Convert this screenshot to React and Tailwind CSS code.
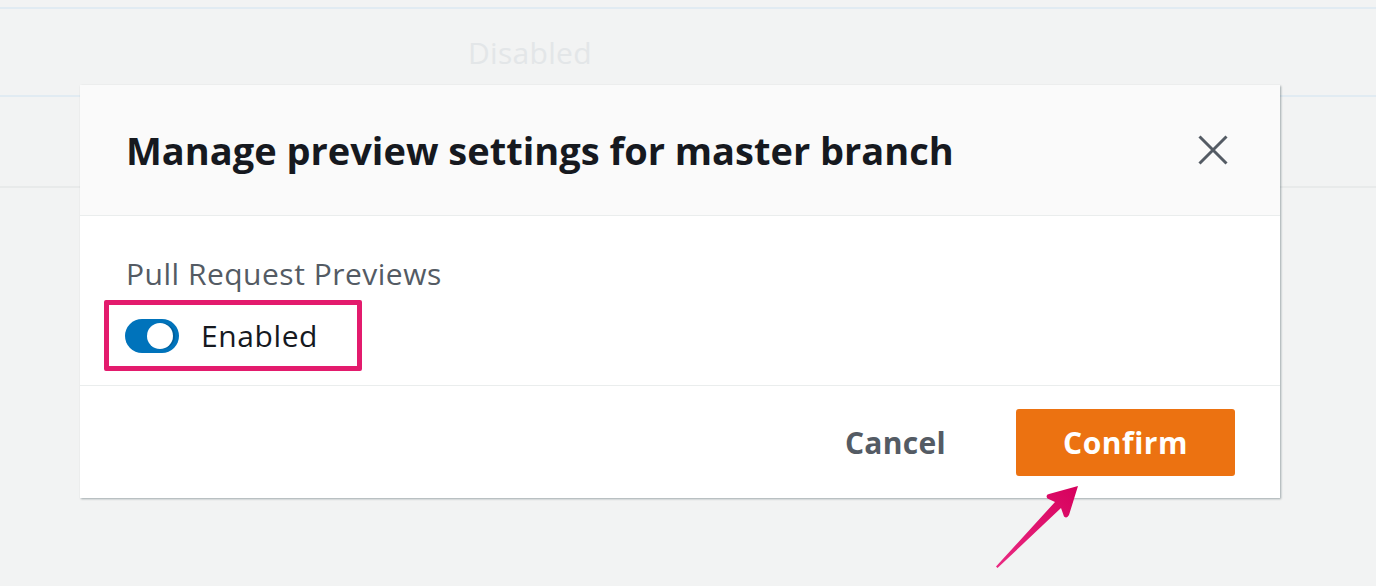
import React, { useState } from 'react';

const font = { fontFamily: '"Open Sans", "Liberation Sans", sans-serif' };

function Toggle({ on, onChange }) {
  return (
    <button
      type="button"
      onClick={() => onChange(!on)}
      className={`relative w-[54px] h-[34px] rounded-full shrink-0 ${on ? 'bg-[#0073bb]' : 'bg-[#687078]'}`}
    >
      <span
        className={`absolute top-[4px] w-[26px] h-[26px] rounded-full bg-white shadow-[2px_0_0_#00609c] ${on ? 'left-[22px]' : 'left-[4px]'}`}
      />
    </button>
  );
}

export default function App() {
  const [enabled, setEnabled] = useState(true);

  return (
    <div style={font} className="relative w-full h-[586px] bg-[#f2f3f3] overflow-hidden">
      {/* table behind the dialog */}
      <div className="flex flex-col">
        <div className="h-[9px] border-b-2 border-[#e1ebf2]" />
        <div className="h-[88px] border-b-2 border-[#e1ebf2] flex items-center pl-[468px]">
          <span className="text-[30px] tracking-[0.3px] text-[#e3e6e8]">Disabled</span>
        </div>
        <div className="h-[91px] border-b-2 border-[#e8eaea]" />
      </div>

      {/* modal */}
      <div className="absolute left-[80px] top-[85px] w-[1200px] bg-white shadow-[1px_1px_2px_rgba(0,28,36,0.35)] flex flex-col">
        <div className="h-[131px] bg-[#fafafa] border-b border-[#eaeded] flex items-center justify-between pl-[46px] pr-[52px]">
          <h2 className="text-[38px] font-bold text-[#16191f]">
            Manage preview settings for master branch
          </h2>
          <button type="button" className="w-[30px] h-[30px] text-[#545b64]">
            <svg viewBox="0 0 30 30" className="w-[30px] h-[30px]" fill="none" stroke="currentColor" strokeWidth="3">
              <path d="M1.5 1.5 L28.5 28.5 M28.5 1.5 L1.5 28.5" />
            </svg>
          </button>
        </div>

        <div className="h-[170px] border-b border-[#eaeded] pl-[24px] pt-[40px]">
          <div className="pl-[22px] text-[30px] tracking-[0.5px] text-[#545b64] leading-[36px]">Pull Request Previews</div>
          <div className="mt-[8px] w-[258px] h-[71px] border-[5px] border-[#e31b6d] rounded-[2px] flex items-center gap-[22px] pl-[16px]">
            <Toggle on={enabled} onChange={setEnabled} />
            <span className="text-[30px] tracking-[0.6px] text-[#16191f]">Enabled</span>
          </div>
        </div>

        <div className="h-[112px] flex items-center justify-end pr-[45px] gap-[70px]">
          <button type="button" className="text-[30px] tracking-[0.3px] font-bold text-[#545b64]">Cancel</button>
          <button type="button" className="w-[219px] h-[67px] rounded-[3px] bg-[#ec7211] text-[30px] tracking-[0.5px] font-bold text-white">
            Confirm
          </button>
        </div>
      </div>

      {/* annotation arrow */}
      <svg className="absolute left-0 top-0 pointer-events-none" width="1376" height="586">
        <defs>
          <linearGradient id="arr" x1="0" y1="1" x2="1" y2="0">
            <stop offset="0" stopColor="#ea2a82" />
            <stop offset="1" stopColor="#d6005c" />
          </linearGradient>
        </defs>
        <path
          d="M996 566.5 L1055 502 L1047.5 498.5 Q1045 495 1049 494 L1078 486 L1069 515 Q1067 519 1064 516.5 L1061 508 L997.5 568 Z"
          fill="url(#arr)"
        />
      </svg>
    </div>
  );
}
